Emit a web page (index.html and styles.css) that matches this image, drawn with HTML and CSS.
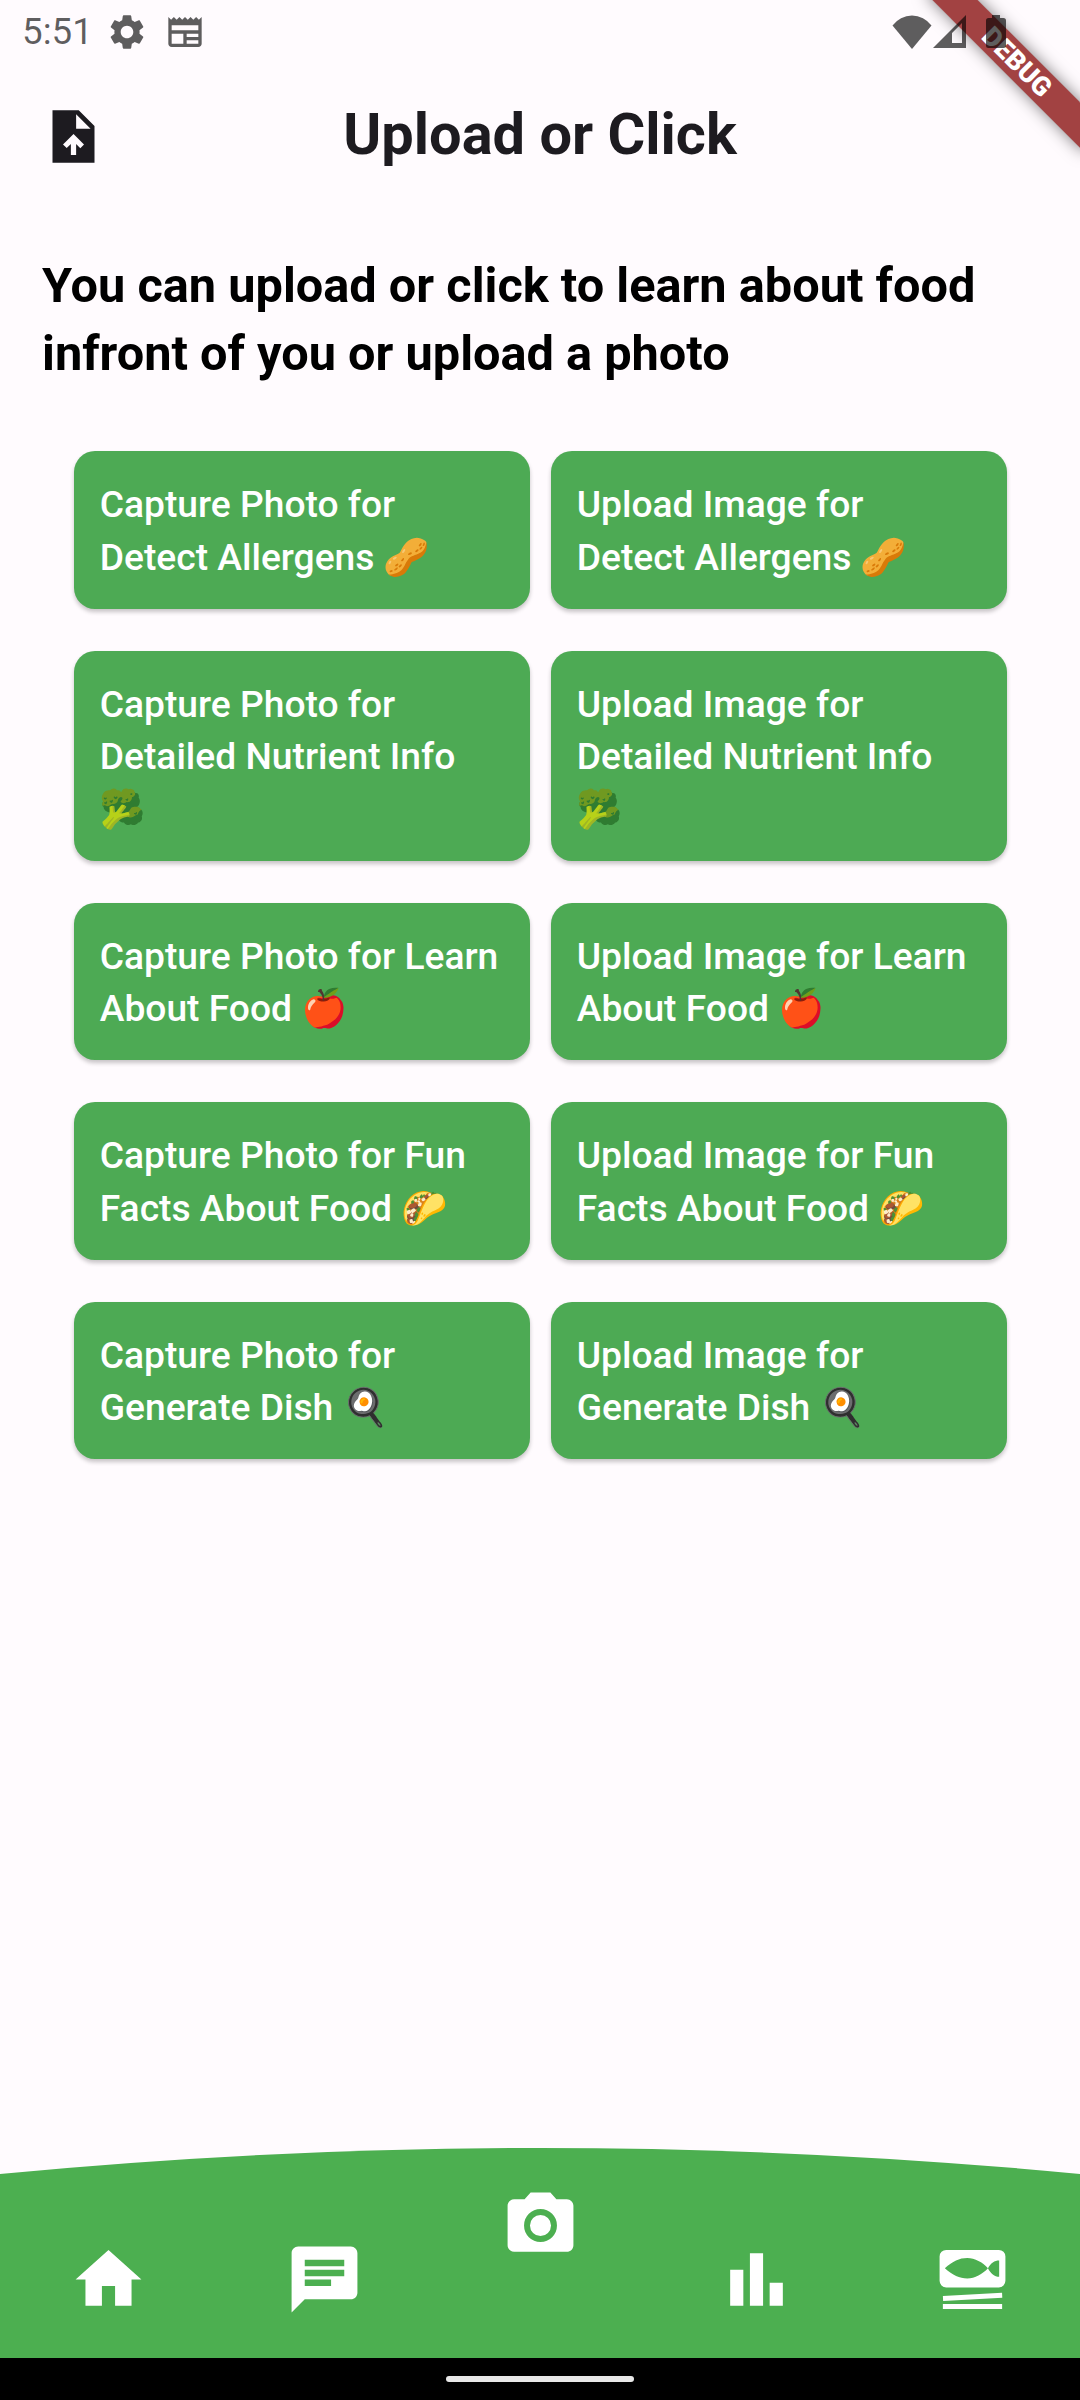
FILE: index.html
```html
<!DOCTYPE html>
<html lang="en">
<head>
<meta charset="utf-8">
<title>Upload or Click</title>
<link rel="stylesheet" href="styles.css">
</head>
<body>
<div class="status">
  <span class="time">5:51</span>
  <svg class="st-gear" viewBox="0 0 24 24"><path d="M19.14 12.94c.04-.3.06-.61.06-.94 0-.32-.02-.64-.07-.94l2.03-1.58c.18-.14.23-.41.12-.61l-1.92-3.32c-.12-.22-.37-.29-.59-.22l-2.39.96c-.5-.38-1.03-.7-1.62-.94l-.36-2.54c-.04-.24-.24-.41-.48-.41h-3.84c-.24 0-.43.17-.47.41l-.36 2.54c-.59.24-1.13.57-1.62.94l-2.39-.96c-.22-.08-.47 0-.59.22L2.74 8.87c-.12.21-.08.47.12.61l2.03 1.58c-.05.3-.09.63-.09.94s.02.64.07.94l-2.03 1.58c-.18.14-.23.41-.12.61l1.92 3.32c.12.22.37.29.59.22l2.39-.96c.5.38 1.03.7 1.62.94l.36 2.54c.05.24.24.41.48.41h3.84c.24 0 .44-.17.47-.41l.36-2.54c.59-.24 1.13-.56 1.62-.94l2.39.96c.22.08.47 0 .59-.22l1.92-3.32c.12-.22.07-.47-.12-.61l-2.01-1.58zM12 15.6c-1.98 0-3.6-1.62-3.6-3.6s1.62-3.6 3.6-3.6 3.6 1.62 3.6 3.6-1.62 3.6-3.6 3.6z"/></svg>
  <svg class="st-news" viewBox="0 0 24 24"><path d="M22 3l-1.67 1.67L18.67 3 17 4.67 15.33 3l-1.66 1.67L12 3l-1.67 1.67L8.67 3 7 4.67 5.33 3 3.67 4.67 2 3v16c0 1.1.9 2 2 2h16c1.1 0 2-.9 2-2V3zM11 19H4v-6h7v6zm9 0h-7v-2h7v2zm0-4h-7v-2h7v2zm0-4H4V8h16v3z"/></svg>
  <div class="st-right">
    <svg class="st-wifi" viewBox="0 0 40 34"><path d="M.5 10.500A24 24 0 0 1 39.500 10.500L20 34Z"/></svg>
    <svg class="st-signal" viewBox="0 0 34 33"><path fill-rule="evenodd" d="M0 33 33 0V33ZM19 28H29V8L19 18Z"/></svg>
    <svg class="st-batt" viewBox="0 0 20 33"><path d="M6 0h8v3h3.500a2.500 2.500 0 0 1 2.500 2.500V30.500a2.500 2.500 0 0 1-2.500 2.500H2.500A2.500 2.500 0 0 1 0 30.500V5.500A2.500 2.500 0 0 1 2.500 3H6Z"/></svg>
  </div>
</div>

<header class="appbar">
  <svg class="upload-icon" viewBox="0 0 24 24"><path fill-rule="evenodd" d="M14 2H4v20h16V8l-6-6zM13 3.500V9h5.500zM8 15.010l1.410 1.410L11 14.840V19h2v-4.160l1.590 1.590L16 15.010 12.010 11z"/></svg>
  <h1 class="title">Upload or Click</h1>
</header>

<main class="content">
  <h2 class="heading">You can upload or click to learn about food infront of you or upload a photo</h2>
  <div class="grid">
    <button class="card">Capture Photo for Detect Allergens 🥜</button>
    <button class="card">Upload Image for Detect Allergens 🥜</button>
    <button class="card">Capture Photo for Detailed Nutrient Info 🥦</button>
    <button class="card">Upload Image for Detailed Nutrient Info 🥦</button>
    <button class="card">Capture Photo for Learn About Food 🍎</button>
    <button class="card">Upload Image for Learn About Food 🍎</button>
    <button class="card">Capture Photo for Fun Facts About Food 🌮</button>
    <button class="card">Upload Image for Fun Facts About Food 🌮</button>
    <button class="card">Capture Photo for Generate Dish 🍳</button>
    <button class="card">Upload Image for Generate Dish 🍳</button>
  </div>
</main>

<nav class="bottom">
  <div class="tab"><svg class="nav-icon" viewBox="0 0 24 24"><path d="M10 20v-6h4v6h5v-8h3L12 3 2 12h3v8z"/></svg></div>
  <div class="tab"><svg class="nav-icon" viewBox="0 0 24 24"><path d="M20 2H4c-1.100 0-1.990.9-1.990 2L2 22l4-4h14c1.100 0 2-.9 2-2V4c0-1.100-.9-2-2-2zM6 9h12v2H6V9zm8 5H6v-2h8v2zm4-6H6V6h12v2z"/></svg></div>
  <div class="tab tab-raised"><svg class="nav-icon" viewBox="0 0 24 24"><path fill-rule="evenodd" d="M9 2 7.170 4H4c-1.100 0-2 .9-2 2v12c0 1.100.9 2 2 2h16c1.100 0 2-.9 2-2V6c0-1.100-.9-2-2-2h-3.170L15 2H9zM12 17a5 5 0 1 0 0-10 5 5 0 0 0 0 10zM12 15.200a3.200 3.200 0 1 1 0-6.400 3.200 3.200 0 0 1 0 6.400z"/></svg></div>
  <div class="tab"><svg class="nav-icon" viewBox="0 0 24 24"><path d="M4 9h4v11H4zm12 4h4v7h-4zm-6-9h4v16h-4z"/></svg></div>
  <div class="tab"><svg class="nav-icon" viewBox="0 0 24 24"><path d="M21.050 17.560 3.080 18.500 3 17l17.980-.94.07 1.500zM21 19.480H3v1.500h18v-1.500z"/><path fill-rule="evenodd" d="M4 3h16a2 2 0 0 1 2 2v7.400a2 2 0 0 1-2 2H4a2 2 0 0 1-2-2V5a2 2 0 0 1 2-2zM3.600 8.600C6 6.500 8 5.500 10.400 5.500 12.800 5.500 15 6.800 16.700 8.600 15 10.400 12.800 11.700 10.400 11.700 8 11.700 6 10.700 3.600 8.600zM16.700 8.600C17.500 7 18.700 6.200 20.100 6.200V11.200C18.700 11.200 17.500 10.200 16.700 8.600z"/></svg></div>
</nav>
<div class="sysnav"><span class="handle"></span></div>

<div class="debug"><span>DEBUG</span></div>
</body>
</html>
```
FILE: styles.css
```css
* { box-sizing: border-box; }
html, body { margin: 0; padding: 0; }
body {
  width: 1080px;
  height: 2400px;
  overflow: hidden;
  position: relative;
  display: flex;
  flex-direction: column;
  background: #fffbfe;
  font-family: Roboto, "Noto Color Emoji", "Noto Sans", sans-serif;
}
.status {
  height: 63px;
  flex: none;
  display: flex;
  align-items: center;
  padding: 0 74px 0 22px;
  fill: rgba(0, 0, 0, .63);
  color: rgba(0, 0, 0, .63);
  position: relative;
  z-index: 2;
}
.time { font-size: 36.75px; line-height: 66px; width: 84px; }
.st-gear { width: 42px; height: 42px; }
.st-news { width: 40px; height: 40px; margin-left: 17px; }
.st-right { margin-left: auto; display: flex; align-items: center; }
.st-wifi { width: 40px; height: 34px; }
.st-signal { width: 34px; height: 33px; margin-left: 1px; }
.st-batt { width: 20px; height: 33px; margin-left: 19px; }

.appbar {
  height: 147px;
  flex: none;
  display: flex;
  align-items: center;
  justify-content: center;
  position: relative;
  padding-bottom: 6px;
}
.upload-icon {
  position: absolute;
  left: 42px;
  top: 42px;
  width: 63px;
  height: 63px;
  fill: #1d1b20;
}
.title {
  margin: 0;
  font-size: 57.75px;
  font-weight: 700;
  color: #1d1b20;
  line-height: 70px;
}
.content { flex: 1; padding: 42px 42px 0; }
.heading {
  margin: 0 0 63px;
  font-size: 48.7px;
  line-height: 68px;
  font-weight: 700;
  color: #000;
}
.grid {
  margin: 0 31.500px;
  display: grid;
  grid-template-columns: 1fr 1fr;
  column-gap: 21px;
  row-gap: 42px;
}
.card {
  border: 0;
  font: 500 37.200px/52.500px Roboto, "Noto Color Emoji", "Noto Sans", sans-serif;
  text-align: left;
  color: #fff;
  background: #4daa54;
  border-radius: 21px;
  padding: 27px 28px 25.500px 26.250px;
  box-shadow: 0 3px 4px rgba(0, 0, 0, .22);
}
.bottom {
  height: 210px;
  flex: none;
  display: flex;
  padding-top: 92px;
  background: #4caf50;
  clip-path: path('M0 26Q540 -26 1080 26V210H0Z');
}
.tab { flex: 1; display: flex; justify-content: center; align-items: flex-start; }
.tab-raised { margin-top: -54px; }
.nav-icon { width: 79px; height: 79px; fill: #fff; }
.sysnav {
  height: 42px;
  flex: none;
  background: #000;
  display: flex;
  justify-content: center;
  align-items: center;
}
.handle { width: 188px; height: 6px; border-radius: 3px; background: #e8e8e8; }
.debug {
  position: absolute;
  left: 905px;
  top: 46px;
  width: 224px;
  height: 32px;
  z-index: 1;
  transform: rotate(45deg);
  background: rgba(141, 22, 22, .81);
  box-shadow: 0 0 16px rgba(0, 0, 0, .5);
  color: #fff;
  font: 900 26.800px/32px Roboto, sans-serif;
  text-align: center;
}
```
